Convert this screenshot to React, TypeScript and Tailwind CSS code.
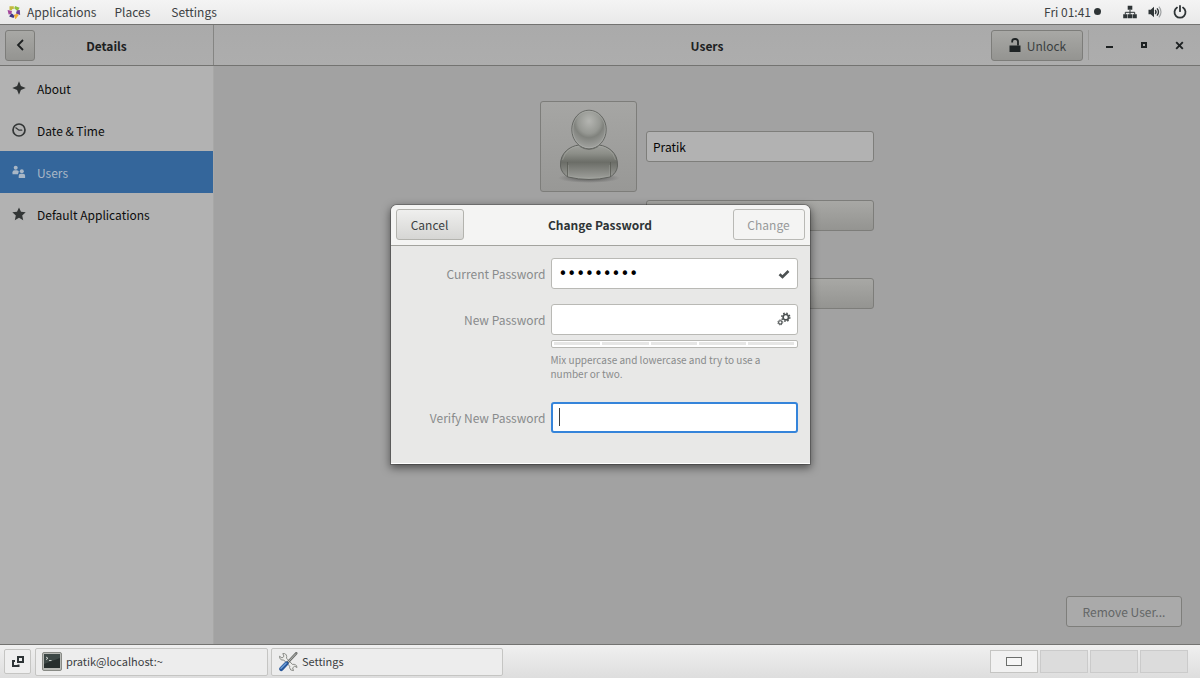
import React from 'react';

const raised =
  'rounded-[3px] border border-[#7d7d7a] bg-linear-to-b from-[#a8a8a5] to-[#949491]';

function CentosLogo() {
  return (
    <svg width="14" height="14" viewBox="0 0 14 14" fill="none" strokeWidth="2.600" aria-hidden="true">
      <path d="M6.800 2.600H3.800v2.700" stroke="#c3b83c" />
      <path d="M7.600 2.300 10.700 3.400 9.500 5.400" stroke="#8fbf3f" />
      <path d="M11.500 5.200 11.700 8.100 9.300 7.300" stroke="#6b3f9c" />
      <path d="M10.700 9.200 8.800 11.700 8 9.500" stroke="#f0ae3a" />
      <path d="M7 11.700 4.200 10.800 5.500 9" stroke="#3c3585" />
      <path d="M2.900 9.300 2.300 6.700 4.700 7.200" stroke="#a2479b" />
    </svg>
  );
}

function NetworkIcon() {
  return (
    <svg width="14" height="14" viewBox="0 0 14 14" fill="#2e3436" aria-hidden="true">
      <path d="M4.700.8h4.600v4H4.700zM.2 9.300h4.200v4H.2zM4.900 9.300h4.200v4H4.900zM9.600 9.300h4.200v4H9.600z" />
      <path d="M7 5v4.500M2.300 9.500V7.300h9.400v2.200" fill="none" stroke="#2e3436" />
    </svg>
  );
}

function VolumeIcon() {
  return (
    <svg width="14" height="14" viewBox="0 0 14 14" fill="none" stroke="#2e3436" aria-hidden="true">
      <path d="M.5 4.700h2.200L6 1.700v10.600L2.700 9.300H.5z" fill="#2e3436" stroke="none" />
      <path d="M7.300 5q1.500 2 0 4" strokeWidth="1.500" />
      <path d="M9 3.400q3 3.600 0 7.200" strokeWidth="1.400" />
      <path d="M10.900 1.700q4.200 5.300 0 10.600" strokeWidth="1.200" opacity=".4" />
    </svg>
  );
}

function PowerIcon() {
  return (
    <svg width="14" height="14" viewBox="0 0 14 14" fill="none" stroke="#2e3436" strokeWidth="1.800" strokeLinecap="round" aria-hidden="true">
      <path d="M4 2.600a5.500 5.500 0 1 0 6 0M7 1v5.200" />
    </svg>
  );
}

function AboutIcon() {
  return (
    <svg width="14" height="14" viewBox="0 0 14 14" aria-hidden="true">
      <path d="M7 .3 8.900 5.100 13.700 7 8.900 8.900 7 13.700 5.100 8.900.3 7l4.800-1.900z" fill="#2f3232" />
    </svg>
  );
}

function ClockIcon() {
  return (
    <svg width="14" height="14" viewBox="0 0 14 14" fill="none" stroke="#333636" aria-hidden="true">
      <circle cx="7" cy="7" r="6" strokeWidth="1.700" />
      <path d="M3.800 4.800 7 7.200h2.800" strokeWidth="1.200" strokeLinecap="round" />
    </svg>
  );
}

function UsersIcon() {
  return (
    <svg width="14" height="14" viewBox="0 0 14 14" fill="#a9b7c6" aria-hidden="true">
      <circle cx="3.700" cy="2.800" r="2" />
      <path d="M.5 9.300V7.200q0-2 2-2h2.400q1.700 0 1.900 1.500L5.900 9.300z" />
      <circle cx="9.800" cy="6.300" r="2" />
      <path d="M6.700 13v-2.300q0-2 2-2h2.400q2 0 2 2V13z" />
    </svg>
  );
}

function StarIcon() {
  return (
    <svg width="14" height="14" viewBox="0 0 14 14" aria-hidden="true">
      <path d="M7 .5l2 4.300 4.700.5-3.500 3.200 1 4.700L7 10.800l-4.200 2.400 1-4.700L.3 5.300 5 4.800z" fill="#333636" />
    </svg>
  );
}

function LockIcon() {
  return (
    <svg width="14" height="16" viewBox="0 0 14 16" aria-hidden="true">
      <path d="M1.500 8.500h11V15h-11z" fill="#1f2425" />
      <path d="M4.200 5.500V4.300q0-2.300 2.800-2.300h.4q2.600 0 2.600 2.500v4" fill="none" stroke="#1f2425" strokeWidth="1.800" />
    </svg>
  );
}

function Avatar() {
  return (
    <svg width="64" height="76" viewBox="0 0 64 76" aria-hidden="true">
      <defs>
        <radialGradient id="head" cx=".5" cy=".28" r=".72">
          <stop offset="0" stopColor="#b4b5b1" />
          <stop offset=".45" stopColor="#969893" />
          <stop offset=".6" stopColor="#80827d" />
          <stop offset="1" stopColor="#a4a5a2" />
        </radialGradient>
        <linearGradient id="body" x1="0" y1="0" x2="0" y2="1">
          <stop offset="0" stopColor="#a0a19d" />
          <stop offset=".25" stopColor="#8c8e88" />
          <stop offset=".5" stopColor="#6b6d67" />
          <stop offset="1" stopColor="#a0a19d" />
        </linearGradient>
        <radialGradient id="ground">
          <stop offset="0" stopColor="#555" />
          <stop offset="1" stopColor="#555" stopOpacity="0" />
        </radialGradient>
      </defs>
      <ellipse cx="32" cy="69" rx="31" ry="5" fill="url(#ground)" />
      <path d="M3.500 56C3 44 13 37 22 36h20c9 1 19 8 18.500 20 0 6-4 10-7.500 12q-21 5-42 0c-3.500-2-7.500-6-7.500-12z" fill="url(#body)" stroke="#60625e" />
      <path d="M5.500 51q4-13 17-14h19q13 1 17 14" fill="none" stroke="#b0b1ad" opacity=".4" />
      <path d="M10.500 53v14.500M53.500 53v14.500" stroke="#555750" opacity=".7" />
      <path d="M11.500 56v11q20.500 4 41 0V56" fill="none" stroke="#aaaba7" opacity=".3" />
      <path d="M23 37q9 6 18 0" stroke="#5f615c" strokeWidth="2" fill="none" opacity=".7" />
      <ellipse cx="32" cy="20.500" rx="17.200" ry="19.300" fill="url(#head)" stroke="#666864" />
      <ellipse cx="32" cy="20.500" rx="16.200" ry="18.300" fill="none" stroke="#b0b1ae" opacity=".5" />
    </svg>
  );
}

function GearsIcon() {
  return (
    <svg width="14" height="14" viewBox="0 0 14 14" fill="none" stroke="#4c5152" aria-hidden="true">
      <circle cx="8.800" cy="5.200" r="2.700" strokeWidth="1.700" />
      <circle cx="8.800" cy="5.200" r="4" strokeWidth="1.500" strokeDasharray="1.570 1.570" />
      <circle cx="3.300" cy="10.400" r="1.700" strokeWidth="1.100" />
      <circle cx="3.300" cy="10.400" r="2.500" strokeWidth="1" strokeDasharray=".98 .98" />
    </svg>
  );
}

function TerminalIcon() {
  return (
    <svg width="20" height="19" viewBox="0 0 20 19" aria-hidden="true">
      <rect x=".5" y=".5" width="19" height="18" rx="1.500" fill="#b8bab6" stroke="#888a85" />
      <rect x="2" y="2" width="16" height="14" fill="#272f2e" />
      <path d="M2 2h16v4L2 12z" fill="#3d4846" />
      <path d="M4 5l2 1.300L4 7.600M7 8.500h2.500" stroke="#d8dcd8" fill="none" strokeWidth=".9" />
    </svg>
  );
}

function ToolsIcon() {
  return (
    <svg width="20" height="20" viewBox="0 0 20 20" aria-hidden="true">
      <path d="M1.500 4.200 4 6l2-1.700L4.800 1.600Q8.200 1 8.700 4.500l-.2 1.700 5.900 6.200q4.200-.7 4.600 3.100l-2.300-1.300-2.100 1.700.9 2.700q-3.600.2-3.900-3l.1-1.400-6-6.200Q1.600 8.600 1.500 4.200z" fill="#ededeb" stroke="#7f817d" strokeWidth=".9" />
      <path d="M18.200 1.300 9.300 10.800" stroke="#6c6e6b" strokeWidth="2.600" strokeLinecap="round" />
      <path d="M18 1.500 9.600 10.400" stroke="#b8bab7" strokeWidth="1" />
      <path d="M8.600 11.400 3.200 17" stroke="#28579a" strokeWidth="4.200" strokeLinecap="round" />
      <path d="M8 11.200 3 16.300" stroke="#6d9dd6" strokeWidth="1.600" strokeLinecap="round" />
    </svg>
  );
}

const sections = [
  { label: 'About', icon: <AboutIcon /> },
  { label: 'Date & Time', icon: <ClockIcon /> },
  { label: 'Users', icon: <UsersIcon />, active: true },
  { label: 'Default Applications', icon: <StarIcon /> },
];

function TopBar() {
  return (
    <nav className="flex h-6 items-center bg-linear-to-b from-[#f4f4f4] to-[#e9e9e9] pb-px pl-[7px] pr-[13px] text-[#3c4143]">
      <button className="flex items-center gap-[6px]">
        <CentosLogo />
        Applications
      </button>
      <button className="ml-[18px]">Places</button>
      <button className="ml-[21px]">Settings</button>
      <button className="ml-auto flex items-center gap-[3px]">
        Fri 01:41
        <span className="size-[7px] rounded-full bg-[#2e3436]" />
      </button>
      <div className="ml-[22px] flex items-center gap-[11px]">
        <button aria-label="Network"><NetworkIcon /></button>
        <button aria-label="Volume"><VolumeIcon /></button>
        <button aria-label="Power"><PowerIcon /></button>
      </div>
    </nav>
  );
}

function HeaderBar() {
  return (
    <header className="flex h-[42px] border-y border-[#737371] bg-linear-to-b from-[#aaaaaa] to-[#adadad]">
      <div className="flex w-[214px] items-center border-r border-[#858583] pl-[5px]">
        <button aria-label="Back" className={`${raised} flex h-[31px] w-[30px] items-center justify-center`}>
          <svg width="10" height="12" viewBox="0 0 10 12" fill="none" stroke="#1d2021" strokeWidth="1.800" aria-hidden="true">
            <path d="M8 1 3 6l5 5" />
          </svg>
        </button>
        <h2 className="flex-1 pr-[35px] text-center font-bold text-[#1d2122]">Details</h2>
      </div>
      <div className="flex flex-1 items-center pr-[13px]">
        <h1 className="flex-1 pl-[209px] text-center font-bold text-[#1d2122]">Users</h1>
        <button className={`${raised} flex h-[31px] w-[92px] items-center justify-center gap-[5px] text-[#3a3f40]`}>
          <LockIcon />
          Unlock
        </button>
        <span className="ml-[5px] h-[30px] w-px bg-[#9a9a98]" />
        <button aria-label="Minimize" className="ml-[11px] flex h-[30px] w-[18px] items-center justify-center">
          <span className="mt-1 h-[2px] w-[7px] bg-[#1d2122]" />
        </button>
        <button aria-label="Maximize" className="ml-[17px] flex h-[30px] w-[18px] items-center justify-center">
          <span className="size-[6px] border-2 border-[#1d2122]" />
        </button>
        <button aria-label="Close" className="ml-[18px] flex h-[30px] w-[16px] items-center justify-center">
          <svg width="9" height="9" viewBox="0 0 9 9" stroke="#1d2122" strokeWidth="1.900" aria-hidden="true">
            <path d="M1.200 1.200l6.600 6.600M7.800 1.200 1.200 7.800" />
          </svg>
        </button>
      </div>
    </header>
  );
}

function Sidebar() {
  return (
    <aside className="w-[214px] border-r border-[#a8a8a7] bg-[#b2b2b2] pt-px">
      <ul>
        {sections.map((s) => (
          <li key={s.label}>
            <a
              href="#"
              className={`flex h-[42px] items-center gap-[11px] pl-3 ${s.active ? 'bg-[#34669b] text-[#a9b7c6]' : 'text-[#0c0c0c]'}`}
            >
              {s.icon}
              {s.label}
            </a>
          </li>
        ))}
      </ul>
    </aside>
  );
}

function UserPanel() {
  return (
    <main className="flex flex-1 flex-col bg-[#a2a2a2] pt-[35px] pr-[18px] pb-[17px]">
      <div className="grid grid-cols-[97px_228px] justify-center gap-x-[9px] pl-[18px]">
        <button aria-label="Change picture" className="flex h-[91px] items-center justify-center rounded-[3px] border border-[#7d7d7a] bg-linear-to-b from-[#a6a6a4] to-[#989896]">
          <Avatar />
        </button>
        <input aria-label="Full name" defaultValue="Pratik" className="h-[31px] w-full self-center rounded-[3px] border border-[#7e7e7b] bg-[#b2b2b2] px-[6px] text-[#050505]" />
        <button aria-label="Account type" className={`${raised} col-start-2 mt-2 h-[31px]`} />
        <button aria-label="Password" className={`${raised} col-start-2 mt-[47px] h-[31px]`} />
      </div>
      <button disabled className="mt-auto h-[31px] w-[116px] self-end rounded-[3px] border border-[#7e7e7b] bg-[#aaaaaa] text-[#636666]">
        Remove User...
      </button>
    </main>
  );
}

const field = 'h-[31px] w-full rounded-[3px] border border-[#b9b9b5] bg-white px-[7px] outline-none';

function PasswordDialog() {
  return (
    <form role="dialog" aria-label="Change Password" className="w-[419px] rounded-t-[6px] border-b border-white bg-[#e8e8e7] shadow-[0_3px_9px_1px_rgba(0,0,0,0.5),0_0_0_1px_rgba(0,0,0,0.22)]">
      <div className="flex h-[41px] items-center rounded-t-[6px] border-b border-[#a3a39e] bg-[#f4f4f3] px-[5px]">
        <button type="button" className="h-[31px] w-[68px] rounded-[3px] border border-[#b3b3ae] bg-linear-to-b from-[#efefee] to-[#d6d6d4] text-[#3c4143]">
          Cancel
        </button>
        <h3 className="flex-1 pl-1 text-center font-bold text-[#2e3436]">Change Password</h3>
        <button type="submit" disabled className="h-[31px] w-[72px] rounded-[3px] border border-[#b9b9b5] bg-[#f4f4f3] text-[#97999a]">
          Change
        </button>
      </div>
      <div className="grid grid-cols-[1fr_247px] gap-x-[5px] pt-[12px] pr-3 pb-[30px] text-[#888b8c]">
        <label htmlFor="current" className="self-center text-right">Current Password</label>
        <div className="relative">
          <input id="current" type="password" defaultValue="123456789" className={`${field} pt-px font-['DejaVu_Sans',sans-serif] text-[15px] text-black`} />
          <svg width="12" height="12" viewBox="0 0 12 12" className="absolute top-[10px] right-2" aria-hidden="true">
            <path d="M1.500 6.200 4.500 9l6-6" fill="none" stroke="#4c5152" strokeWidth="2.600" />
          </svg>
        </div>
        <label htmlFor="new" className="mt-[15px] self-center text-right">New Password</label>
        <div className="relative mt-[15px]">
          <input id="new" type="password" className={`${field} text-black`} />
          <button type="button" aria-label="Generate a password" className="absolute top-2 right-[7px]">
            <GearsIcon />
          </button>
        </div>
        <div role="meter" aria-label="Password strength" aria-valuenow={0} className="col-start-2 mt-[5px] flex h-2 items-center gap-[2px] rounded-[2px] border border-[#b9b9b5] bg-white px-[2px]">
          <span className="h-[3px] flex-1 bg-[#e6e6e5]" />
          <span className="h-[3px] flex-1 bg-[#e6e6e5]" />
          <span className="h-[3px] flex-1 bg-[#e6e6e5]" />
          <span className="h-[3px] flex-1 bg-[#e6e6e5]" />
          <span className="h-[3px] flex-1 bg-[#e6e6e5]" />
        </div>
        <p className="col-start-2 mt-[5px] text-[10px] leading-[14px]">
          Mix uppercase and lowercase and try to use a number or two.
        </p>
        <label htmlFor="verify" className="mt-[21px] self-center text-right">Verify New Password</label>
        <div className="relative mt-[21px]">
          <input id="verify" type="password" className="h-[31px] w-full rounded-[3px] border-2 border-[#3584da] bg-white px-2 text-black caret-transparent outline-none" />
          <span className="absolute top-[6px] left-2 h-[18px] w-px bg-[#3c3f40]" />
        </div>
      </div>
    </form>
  );
}

function TaskBar() {
  return (
    <footer className="flex h-[34px] items-center border-t border-[#737371] bg-linear-to-b from-[#f0f0f0] to-[#dedede] pl-1 pr-3 text-[11px] text-[#3c4143]">
      <button aria-label="Show desktop" className="flex h-[25px] w-[27px] items-center justify-center rounded-[2px] border border-[#c5c5c3] bg-[#efefef]">
        <svg width="14" height="13" viewBox="0 0 14 13" fill="none" stroke="#2e3436" strokeWidth="2" aria-hidden="true">
          <path d="M7 2h5v5H7z" />
          <path d="M4 6H2v5h5.500V9.500" />
        </svg>
      </button>
      <button className="ml-1 flex h-[28px] w-[233px] items-center gap-1 rounded-[2px] border border-[#c5c5c3] bg-[#ededed] px-[6px]">
        <TerminalIcon />
        pratik@localhost:~
      </button>
      <button className="ml-[3px] flex h-[28px] w-[232px] items-center gap-1 rounded-[2px] border border-[#c5c5c3] bg-[#ededed] px-[6px]">
        <ToolsIcon />
        Settings
      </button>
      <div className="ml-auto flex gap-[2px]">
        <button aria-label="Workspace 1" className="flex h-[23px] w-12 items-center justify-center border border-[#c5c5c3] bg-[#f1f1f1]">
          <span className="h-[9px] w-4 border border-[#6c6e6c] bg-[#f6f6f6]" />
        </button>
        <button aria-label="Workspace 2" className="h-[23px] w-12 border border-[#cbcbcb] bg-[#dcdcdc]" />
        <button aria-label="Workspace 3" className="h-[23px] w-12 border border-[#cbcbcb] bg-[#dcdcdc]" />
        <button aria-label="Workspace 4" className="h-[23px] w-12 border border-[#cbcbcb] bg-[#dcdcdc]" />
      </div>
    </footer>
  );
}

export default function App() {
  return (
    <div className="flex min-h-screen flex-col font-['Noto_Sans_CJK_SC','Open_Sans',sans-serif] text-[12px] leading-[19px]">
      <TopBar />
      <div className="relative flex flex-1 flex-col">
        <HeaderBar />
        <div className="flex flex-1">
          <Sidebar />
          <UserPanel />
        </div>
        <div className="absolute inset-0 flex items-center justify-center">
          <PasswordDialog />
        </div>
      </div>
      <TaskBar />
    </div>
  );
}
